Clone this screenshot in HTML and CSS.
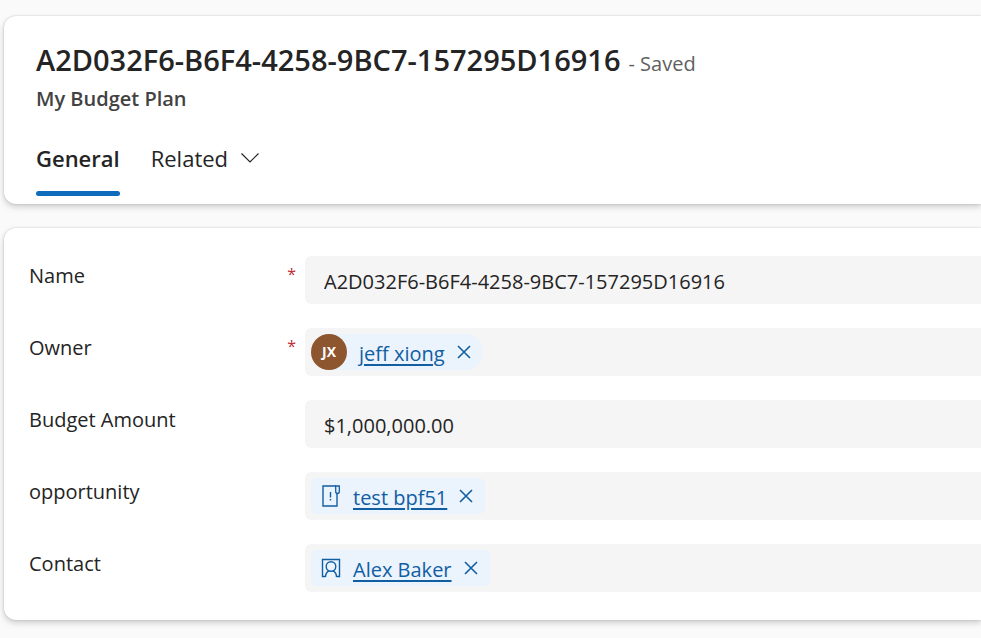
FILE: index.html
```html
<!DOCTYPE html>
<html lang="en">
<head>
<meta charset="utf-8">
<title>My Budget Plan</title>
<link rel="stylesheet" href="styles.css">
</head>
<body>
<main class="page">
  <header class="card record-header">
    <div class="title-row">
      <h1 class="title">A2D032F6-B6F4-4258-9BC7-157295D16916</h1>
      <span class="status">- Saved</span>
    </div>
    <p class="entity">My Budget Plan</p>
    <div class="tabs" role="tablist">
      <button class="tab tab-active" type="button" role="tab" aria-selected="true">General</button>
      <button class="tab" type="button" role="tab" aria-selected="false">Related
        <svg class="chevron" width="20" height="12" viewBox="0 0 20 12" fill="none" stroke="currentColor" stroke-width="1.2" aria-hidden="true"><path d="M1.5 1.5 10 10l8.500-8.500"/></svg>
      </button>
    </div>
  </header>

  <form class="card fields">
    <div class="row">
      <label class="label" for="name">Name <span class="required">*</span></label>
      <input class="control" id="name" type="text" value="A2D032F6-B6F4-4258-9BC7-157295D16916">
    </div>
    <div class="row">
      <div class="label">Owner <span class="required">*</span></div>
      <div class="control lookup">
        <div class="chip chip-person">
          <span class="avatar">JX</span>
          <a class="link" href="#">jeff xiong</a>
          <button class="remove" type="button" aria-label="Remove jeff xiong"><svg width="14" height="14" viewBox="0 0 14 14" fill="none" stroke="currentColor" stroke-width="1.6"><path d="M1 1l12 12M13 1 1 13"/></svg></button>
        </div>
      </div>
    </div>
    <div class="row">
      <label class="label" for="amount">Budget Amount</label>
      <input class="control" id="amount" type="text" value="$1,000,000.00">
    </div>
    <div class="row">
      <div class="label">opportunity</div>
      <div class="control lookup">
        <div class="chip">
          <svg class="icon" width="20" height="22" viewBox="0 0 20 22" fill="none" stroke="currentColor" aria-hidden="true"><path stroke-width="1.400" d="M15 1H2v20h14V8.500"/><path stroke-width="1.300" d="M14.700 1h3.600v5.500q0 2-1.800 2t-1.800-2z"/><path stroke-width="1.400" d="M9.500 7v5.500M9.500 14v1.500"/></svg>
          <a class="link" href="#">test bpf51</a>
          <button class="remove" type="button" aria-label="Remove test bpf51"><svg width="14" height="14" viewBox="0 0 14 14" fill="none" stroke="currentColor" stroke-width="1.6"><path d="M1 1l12 12M13 1 1 13"/></svg></button>
        </div>
      </div>
    </div>
    <div class="row">
      <div class="label">Contact</div>
      <div class="control lookup">
        <div class="chip">
          <svg class="icon" width="20" height="20" viewBox="0 0 20 20" fill="none" stroke="currentColor" stroke-width="1.400" aria-hidden="true"><path d="M4.500 18.500H1.500v-17h17v17h-3"/><circle cx="10" cy="8.500" r="4.800"/><path d="M4.500 19c0-3 1.200-5 3.300-6.200M15.500 19c0-3-1.200-5-3.300-6.200"/></svg>
          <a class="link" href="#">Alex Baker</a>
          <button class="remove" type="button" aria-label="Remove Alex Baker"><svg width="14" height="14" viewBox="0 0 14 14" fill="none" stroke="currentColor" stroke-width="1.6"><path d="M1 1l12 12M13 1 1 13"/></svg></button>
        </div>
      </div>
    </div>
  </form>
</main>
</body>
</html>
```
FILE: styles.css
```css
* {
  box-sizing: border-box;
}

body {
  margin: 0;
  background: #fafafa;
  color: #242424;
  font-family: "Segoe UI", "Open Sans", "Noto Sans", sans-serif;
  font-size: 20px;
  line-height: 28px;
}

button,
input {
  font: inherit;
  color: inherit;
  border: 0;
  background: none;
  padding: 0;
}

.page {
  display: flex;
  flex-direction: column;
  gap: 24px;
  padding: 16px 0 16px 4px;
}

.card {
  background: #fff;
  border-radius: 12px 0 0 12px;
  box-shadow: 0 0 2px rgba(0, 0, 0, 0.2), 0 3px 6px rgba(0, 0, 0, 0.18);
}

.record-header {
  padding: 24px 32px 8px;
}

.title-row {
  display: flex;
  align-items: baseline;
  gap: 8px;
}

.title {
  margin: 0;
  font-size: 29px;
  line-height: 40px;
  font-weight: 600;
}

.status {
  color: #616161;
}

.entity {
  margin: 5px 0 0;
  color: #424242;
  font-weight: 600;
}

.tabs {
  display: flex;
  gap: 31px;
  margin-top: 24px;
}

.tab {
  display: flex;
  align-items: center;
  gap: 12px;
  height: 59px;
  padding-bottom: 13px;
  border-bottom: 5px solid transparent;
  font-size: 22px;
}

.tab-active {
  position: relative;
  font-weight: 600;
}

.tab-active::after {
  content: "";
  position: absolute;
  left: 0;
  right: 0;
  bottom: -5px;
  height: 5px;
  border-radius: 3px;
  background: #0f6cbd;
}

.fields {
  display: flex;
  flex-direction: column;
  gap: 24px;
  padding: 28px 0 28px 25px;
}

.row {
  display: grid;
  grid-template-columns: 267px 1fr;
  gap: 9px;
}

.label {
  display: flex;
  justify-content: space-between;
  padding-top: 6px;
}

.required {
  color: #bc2f32;
  font-size: 16px;
  line-height: 24px;
}

.control {
  width: 100%;
  height: 48px;
  padding: 2px 19px 0;
  border-radius: 6px 0 0 6px;
  background: #f5f5f5;
}

.lookup {
  display: flex;
  align-items: center;
  padding: 0 6px;
}

.chip {
  display: flex;
  align-items: center;
  height: 36px;
  padding: 0 12px 0 10px;
  border-radius: 6px;
  background: #ebf3fc;
  color: #115ea3;
}

.chip-person {
  padding-left: 0;
  border-radius: 18px;
}

.avatar {
  width: 36px;
  height: 36px;
  margin-right: 12px;
  border-radius: 50%;
  background: #8e562e;
  color: #fff;
  font-size: 14px;
  line-height: 36px;
  font-weight: 700;
  text-align: center;
}

.icon {
  margin-right: 12px;
}

.link {
  padding-top: 4px;
  color: inherit;
  text-decoration-thickness: 2px;
  text-underline-offset: 3px;
}

.remove {
  display: flex;
  margin-left: 12px;
}
```
